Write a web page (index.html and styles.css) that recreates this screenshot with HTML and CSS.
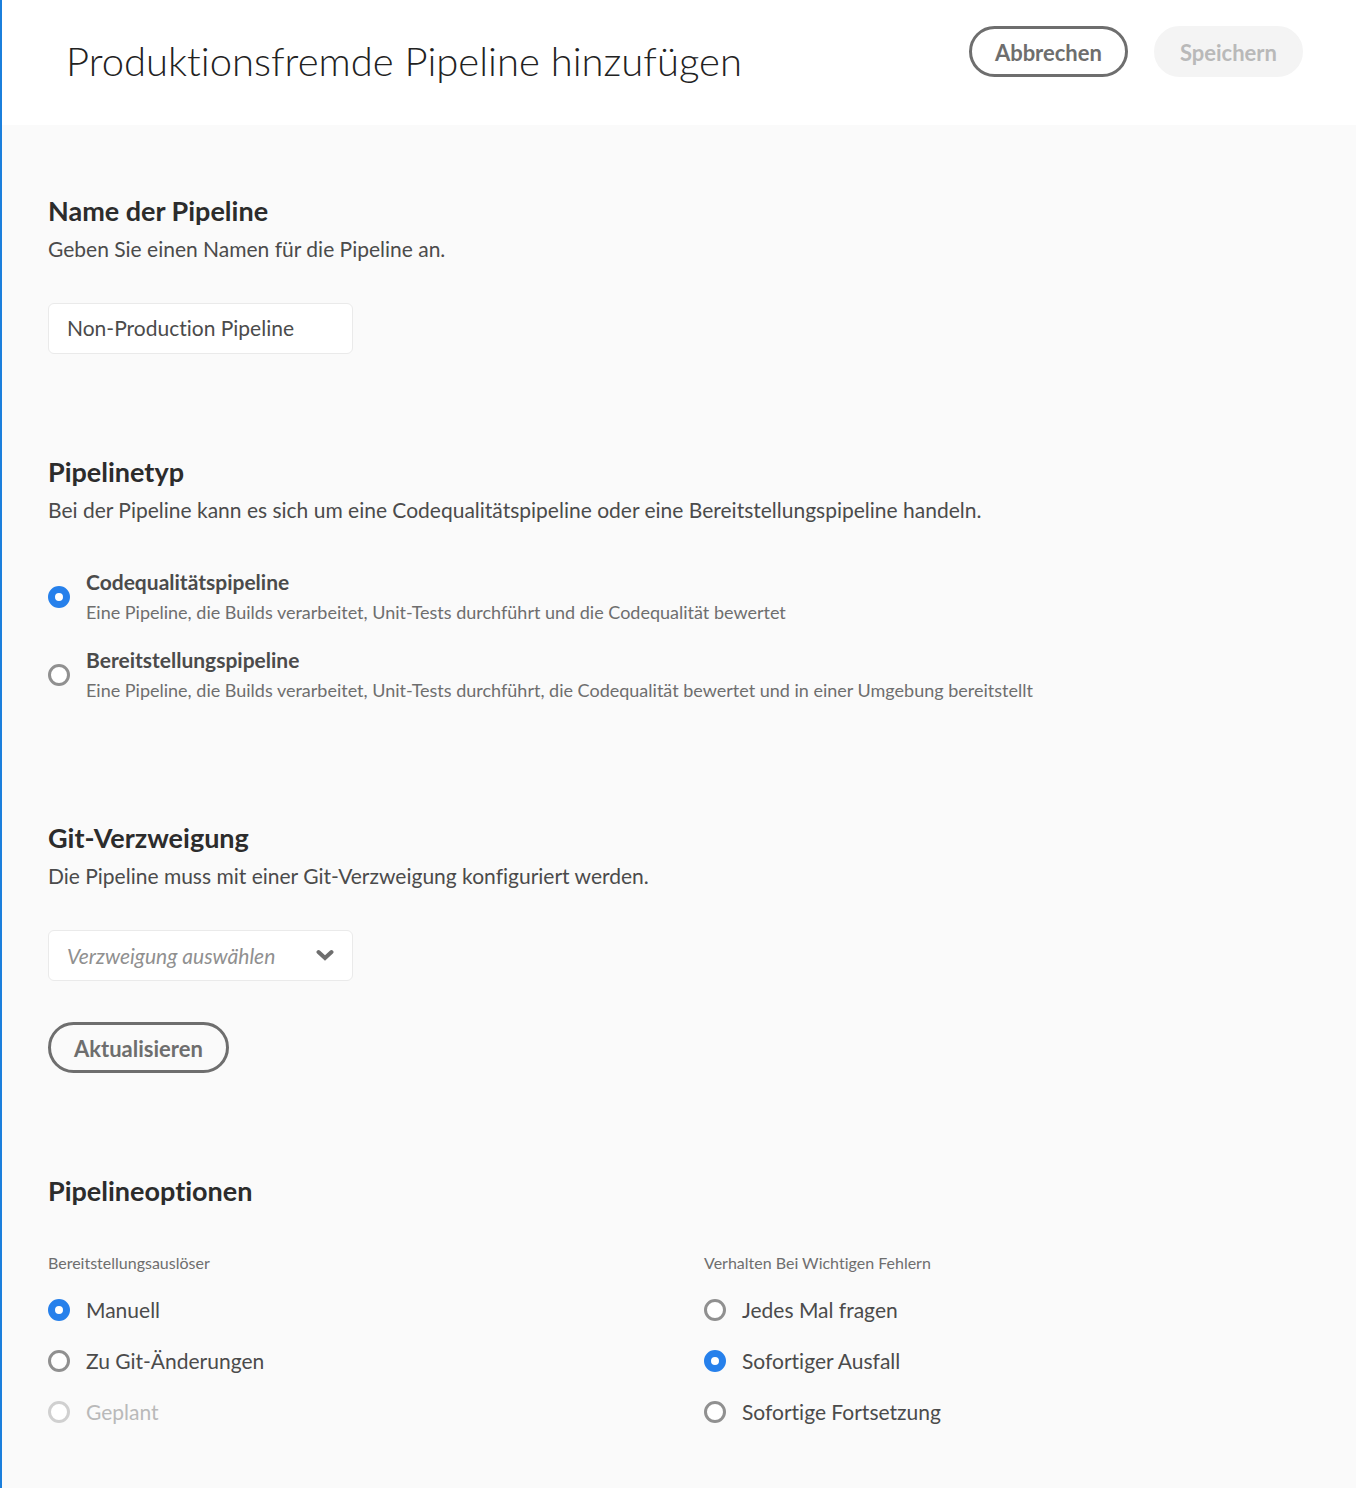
FILE: index.html
```html
<!DOCTYPE html>
<html lang="de">
<head>
<meta charset="utf-8">
<meta name="viewport" content="width=device-width, initial-scale=1">
<title>Produktionsfremde Pipeline hinzufügen</title>
<link rel="stylesheet" href="styles.css">
</head>
<body>
<form class="page">
  <header class="header">
    <h1 class="title">Produktionsfremde Pipeline hinzufügen</h1>
    <div class="actions">
      <button class="button" type="button">Abbrechen</button>
      <button class="button" type="submit" disabled>Speichern</button>
    </div>
  </header>
  <main class="content">
    <section class="section">
      <h2 class="heading"><label for="name">Name der Pipeline</label></h2>
      <p class="description">Geben Sie einen Namen für die Pipeline an.</p>
      <input class="field" id="name" type="text" value="Non-Production Pipeline">
    </section>

    <section class="section">
      <h2 class="heading">Pipelinetyp</h2>
      <p class="description">Bei der Pipeline kann es sich um eine Codequalitätspipeline oder eine Bereitstellungspipeline handeln.</p>
      <div class="types">
        <label class="type">
          <input class="radio" type="radio" name="type" checked>
          <span class="type-text">
            <span class="type-name">Codequalitätspipeline</span>
            <span class="type-note">Eine Pipeline, die Builds verarbeitet, Unit-Tests durchführt und die Codequalität bewertet</span>
          </span>
        </label>
        <label class="type">
          <input class="radio" type="radio" name="type">
          <span class="type-text">
            <span class="type-name">Bereitstellungspipeline</span>
            <span class="type-note">Eine Pipeline, die Builds verarbeitet, Unit-Tests durchführt, die Codequalität bewertet und in einer Umgebung bereitstellt</span>
          </span>
        </label>
      </div>
    </section>

    <section class="section">
      <h2 class="heading"><label for="branch">Git-Verzweigung</label></h2>
      <p class="description">Die Pipeline muss mit einer Git-Verzweigung konfiguriert werden.</p>
      <div class="picker">
        <select class="field select" id="branch">
          <option value="">Verzweigung auswählen</option>
        </select>
        <svg class="chevron" viewBox="0 0 18 12" aria-hidden="true"><path d="M2.500 3l6.500 6 6.500-6"/></svg>
      </div>
      <button class="button refresh" type="button">Aktualisieren</button>
    </section>

    <section class="section">
      <h2 class="heading">Pipelineoptionen</h2>
      <div class="options">
        <fieldset class="group">
          <legend class="legend">Bereitstellungsauslöser</legend>
          <label class="option"><input class="radio" type="radio" name="trigger" checked>Manuell</label>
          <label class="option"><input class="radio" type="radio" name="trigger">Zu Git-Änderungen</label>
          <label class="option option-disabled"><input class="radio" type="radio" name="trigger" disabled>Geplant</label>
        </fieldset>
        <fieldset class="group">
          <legend class="legend">Verhalten Bei Wichtigen Fehlern</legend>
          <label class="option"><input class="radio" type="radio" name="failure">Jedes Mal fragen</label>
          <label class="option"><input class="radio" type="radio" name="failure" checked>Sofortiger Ausfall</label>
          <label class="option"><input class="radio" type="radio" name="failure">Sofortige Fortsetzung</label>
        </fieldset>
      </div>
    </section>
  </main>
</form>
</body>
</html>
```
FILE: styles.css
```css
* {
  box-sizing: border-box;
}

body {
  margin: 0;
  background: #fafafa;
  color: #4b4b4b;
  font-family: Lato, "Open Sans", sans-serif;
  font-size: 21px;
  font-variant-ligatures: none;
}

.page {
  min-height: 100vh;
  border-left: 2px solid #1b7fdc;
}

.header {
  display: flex;
  justify-content: space-between;
  align-items: flex-start;
  gap: 28px;
  padding: 26px 53px 24px 64px;
  background: #fff;
}

.title {
  margin: 0;
  padding: 5px 0 10px;
  color: #222;
  font-size: 40px;
  font-weight: 300;
  line-height: 60px;
}

.actions {
  display: flex;
  gap: 26px;
}

.button {
  height: 51px;
  padding: 2px 23px 0;
  border: 3px solid #6e6e6e;
  border-radius: 26px;
  background: transparent;
  color: #6e6e6e;
  font-family: inherit;
  font-size: 22px;
  font-weight: 700;
}

.button:disabled {
  border-color: #f4f4f4;
  background: #f4f4f4;
  color: #b9b9b9;
}

.content {
  display: flex;
  flex-direction: column;
  gap: 99px;
  padding: 67px 52px 50px 46px;
}

.heading {
  margin: 0;
  color: #2c2c2c;
  font-size: 27px;
  font-weight: 700;
  line-height: 38px;
}

.description {
  margin: 0 0 35px;
  line-height: 38px;
}

.field {
  display: block;
  width: 305px;
  height: 51px;
  padding: 0 18px 2px;
  border: 1px solid #eaeaea;
  border-radius: 6px;
  background: #fff;
  color: #4b4b4b;
  font-family: inherit;
  font-size: 21px;
  font-variant-ligatures: none;
}

.types {
  display: flex;
  flex-direction: column;
  gap: 18px;
  padding: 3px 0 15px;
}

.type,
.option {
  display: flex;
  align-items: center;
  gap: 16px;
}

.type-text {
  display: flex;
  flex-direction: column;
  line-height: 30px;
}

.type-name {
  font-weight: 700;
}

.type-note {
  color: #6e6e6e;
  font-size: 18px;
}

.radio {
  flex: none;
  width: 22px;
  height: 22px;
  margin: 0;
  border: 3px solid #909090;
  border-radius: 50%;
  background: #fff;
  appearance: none;
}

.radio:checked {
  border: 7px solid #2680eb;
}

.radio:disabled {
  border-color: #d0d0d0;
}

.picker {
  position: relative;
  width: 305px;
}

.select {
  padding-bottom: 0;
  appearance: none;
  color: #909090;
  font-style: italic;
}

.chevron {
  position: absolute;
  top: 19px;
  right: 19px;
  width: 18px;
  height: 12px;
  fill: none;
  stroke: #6e6e6e;
  stroke-width: 4;
  stroke-linecap: round;
  pointer-events: none;
}

.refresh {
  margin-top: 41px;
}

.options {
  display: grid;
  grid-template-columns: 1fr 1fr;
  gap: 56px;
  padding-top: 42px;
}

.group {
  min-width: 0;
  margin: 0;
  padding: 0;
  border: 0;
}

.legend {
  padding: 0 0 10px;
  color: #6e6e6e;
  font-size: 16px;
  line-height: 22px;
}

.option {
  height: 51px;
}

.option-disabled {
  color: #b9b9b9;
}
```
